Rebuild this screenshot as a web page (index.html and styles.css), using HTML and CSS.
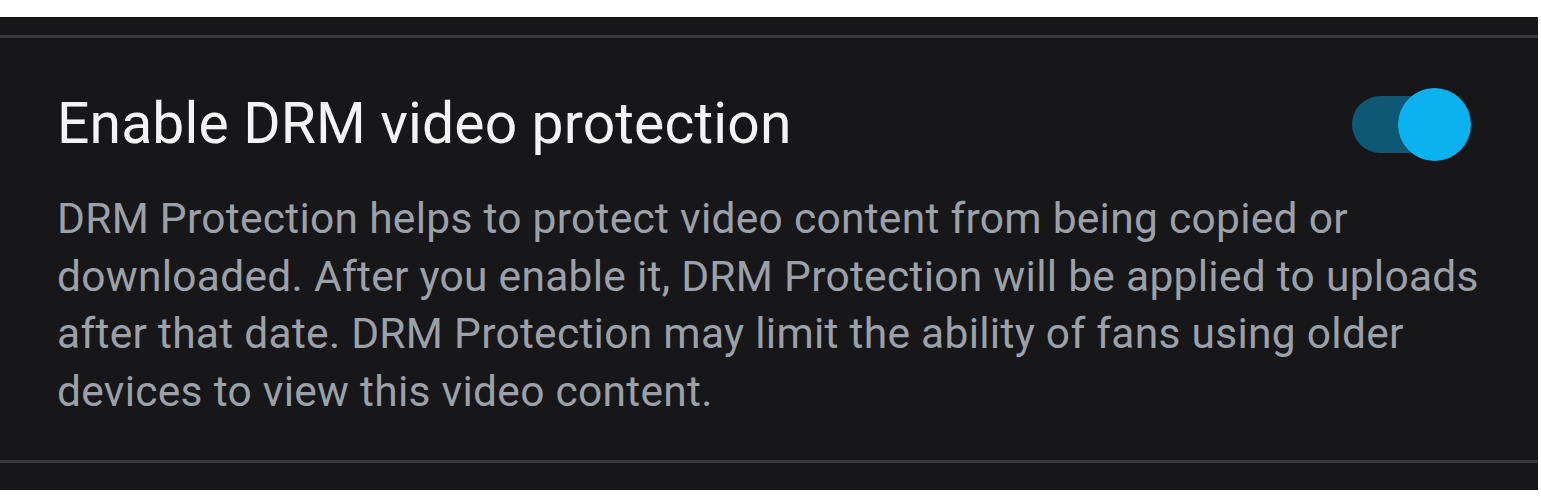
FILE: index.html
```html
<!DOCTYPE html>
<html lang="en">
<head>
<meta charset="utf-8">
<link rel="stylesheet" href="styles.css">
</head>
<body>
<div class="page">
  <section class="panel">
    <div class="divider"></div>
    <div class="setting">
      <div class="row">
        <h2 class="title">Enable DRM video protection</h2>
        <div class="toggle" role="switch" aria-checked="true">
          <span class="track"></span>
          <span class="thumb"></span>
        </div>
      </div>
      <p class="desc">DRM Protection helps to protect video content from being copied or downloaded. After you enable it, DRM Protection will be applied to uploads after that date. DRM Protection may limit the ability of fans using older devices to view this video content.</p>
    </div>
    <div class="divider"></div>
  </section>
</div>
</body>
</html>
```
FILE: styles.css
```css
html, body {
  margin: 0;
  padding: 0;
  background: #ffffff;
}
.page {
  padding-top: 17px;
  height: 483px;
}
.panel {
  width: 1538px;
  height: 473px;
  background: #171719;
  padding-top: 18px;
  box-sizing: border-box;
  font-family: Roboto, "Noto Sans", sans-serif;
}
.divider {
  height: 3px;
  background: #38383b;
}
.setting {
  padding: 54px 67px 40px 57px;
}
.row {
  display: flex;
  align-items: center;
  justify-content: space-between;
  height: 64px;
}
.title {
  margin: 0;
  font-size: 57px;
  font-weight: 400;
  line-height: 64px;
  letter-spacing: 0.15px;
  color: #f4f4f6;
}
.toggle {
  position: relative;
  width: 119px;
  height: 73px;
  flex: none;
}
.track {
  position: absolute;
  left: 0;
  top: 8px;
  width: 104px;
  height: 57px;
  border-radius: 29px;
  background: #0e5876;
}
.thumb {
  position: absolute;
  right: 0;
  top: 0;
  width: 73px;
  height: 73px;
  border-radius: 50%;
  background: #0cb1f0;
}
.desc {
  margin: 34px 0 0;
  font-size: 42.5px;
  line-height: 57.5px;
  letter-spacing: 0.28px;
  color: #9ca1a9;
  width: 1440px;
}
```
